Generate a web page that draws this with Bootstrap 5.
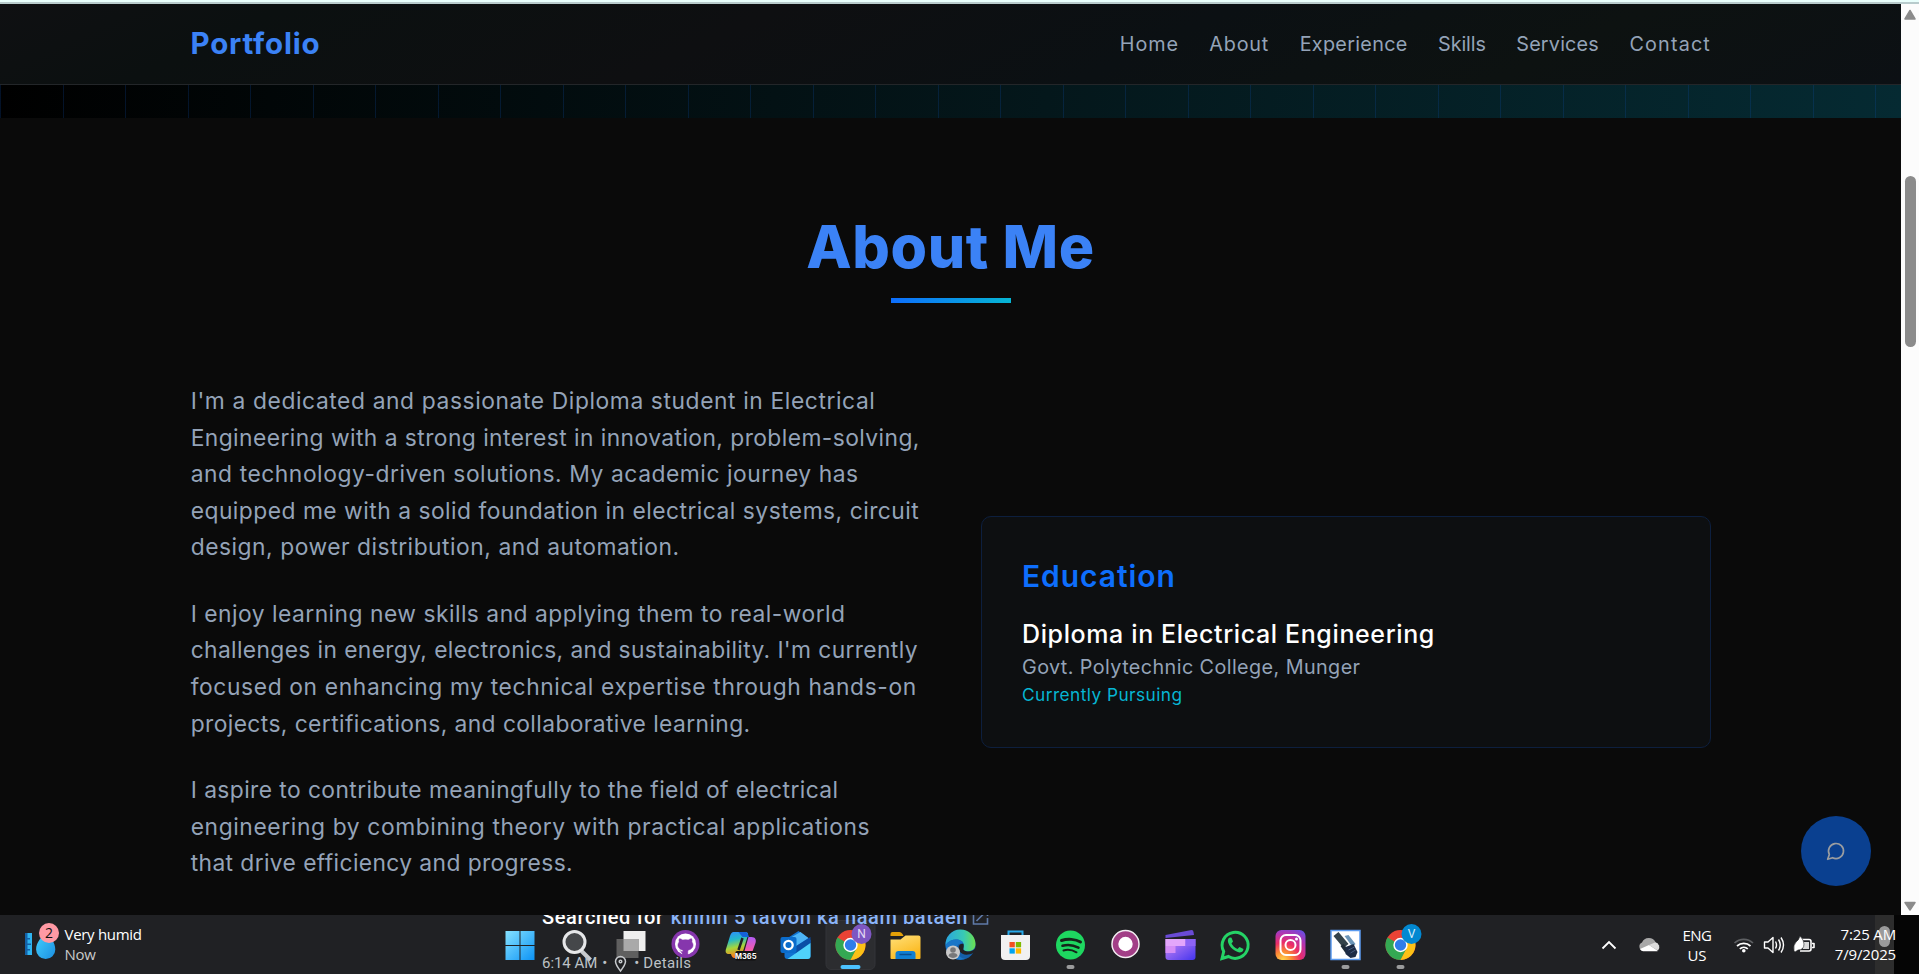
<!DOCTYPE html>
<html lang="en">
<head>
<meta charset="utf-8">
<meta name="viewport" content="width=device-width, initial-scale=1">
<title>Portfolio</title>
<link href="https://cdn.jsdelivr.net/npm/bootstrap@5.3.0/dist/css/bootstrap.min.css" rel="stylesheet">
<style>
body{font-family:Inter,"Open Sans",sans-serif;background:#0a0a0a;white-space:nowrap}
.screen{width:1919px;height:974px}
.edge-top{height:4px;background:linear-gradient(#e9fffc 50%,#b8cbcc 50%)}
.window{height:911px}
.shell{width:1521px;margin-left:190px}
.site-nav{height:81px;border-bottom:1px solid #232629;background:linear-gradient(155deg,#0f1012,#0b1010 14%,#0e0f11 38%,#0b1013 60%,#0d1211 80%,#0c1014)}
.brand{font-size:29.5px;font-weight:700;color:#3b82f6;letter-spacing:.8px;line-height:40px;margin-top:-2px;padding-left:.5px}
.menu{gap:30.5px;margin-right:0}
.menu a{font-size:19.8px;line-height:30px;color:#94a3b8;text-decoration:none}
.grid-band{height:33px;background:repeating-linear-gradient(90deg,rgba(13,80,180,.22) 0 1px,transparent 1px 62.5px),linear-gradient(95deg,#000,#04171b 55%,#052a32)}
.about{padding-top:99px}
.about h1{font-size:59px;font-weight:800;line-height:60px;letter-spacing:.6px;color:#3b82f6;margin-bottom:21px}
.rule{width:120px;height:5px;margin-bottom:80px;background:linear-gradient(90deg,#0d6efd,#06b6d4)}
.cols{gap:61px}
.cols>*{width:730px}
.bio p{font-size:22.8px;line-height:36.56px;margin-bottom:30px;color:#94a3b8}
.bio p:last-child{margin-bottom:0}
.bio span{display:block;padding-left:.7px;word-spacing:.1px}
.edu{height:232px;padding:39px 40px;border:1px solid #0d1f3e;border-radius:10px;background:#0d0f11}
.edu h2{font-size:30px;font-weight:600;line-height:40px;margin-bottom:21px;color:#0d6efd;letter-spacing:.95px}
.edu h3{font-size:25px;font-weight:500;line-height:35px;margin:0;color:#fff;letter-spacing:.62px}
.school{font-size:19.8px;line-height:30px;letter-spacing:.41px;color:#94a3b8}
.status{font-size:17.3px;line-height:25px;letter-spacing:.43px;color:#06b6d4}
.sbar{width:18px;background:#fcfcfc}
.sbar .thumb{width:11px;height:171px;border-radius:6px;background:#8b8b8b;margin-top:154px}
.fab{right:30px;bottom:29px;width:70px;height:70px;background:#0a4090}
.taskbar{height:59px;background:#202124;color:#fff}
.ui{font-family:"Open Sans","Noto Sans",sans-serif;font-size:15px;line-height:20px}
.apps{left:492.500px;top:0}
.slot{width:55px;height:59px}
.ghost{font-family:Roboto,sans-serif;left:542px;top:0}
.gl1{font-size:20px;font-weight:500;line-height:24px;top:-10px;left:0;letter-spacing:.6px}
.gl1 a{color:#8ab4f8;text-decoration:none}
.gl2{font-size:15px;line-height:20px;top:37.500px;left:0;color:#bdc1c6}
.tray{left:1590px;top:0}
</style>
</head>
<body>
<div class="screen d-flex flex-column overflow-hidden">
<div class="edge-top"></div>
<div class="window d-flex">
  <main class="flex-grow-1 position-relative overflow-hidden">
    <nav class="site-nav d-flex align-items-center">
      <div class="shell d-flex justify-content-between align-items-center">
        <span class="brand">Portfolio</span>
        <div class="menu d-flex">
          <a href="#" style="letter-spacing:.9px">Home</a><a href="#" style="letter-spacing:.8px">About</a><a href="#" style="letter-spacing:.3px">Experience</a><a href="#" style="letter-spacing:-.12px">Skills</a><a href="#" style="letter-spacing:.2px">Services</a><a href="#" style="letter-spacing:1.15px">Contact</a>
        </div>
      </div>
    </nav>
    <div class="grid-band"></div>
    <section class="about">
      <h1 class="text-center">About Me</h1>
      <div class="rule mx-auto"></div>
      <div class="shell cols d-flex align-items-center">
        <div class="bio">
          <p><span style="letter-spacing:.589px">I'm a dedicated and passionate Diploma student in Electrical</span>
          <span style="letter-spacing:.425px">Engineering with a strong interest in innovation, problem-solving,</span>
          <span style="letter-spacing:.55px">and technology-driven solutions. My academic journey has</span>
          <span style="letter-spacing:.478px">equipped me with a solid foundation in electrical systems, circuit</span>
          <span style="letter-spacing:.517px">design, power distribution, and automation.</span></p>
          <p><span style="letter-spacing:.476px">I enjoy learning new skills and applying them to real-world</span>
          <span style="letter-spacing:.36px">challenges in energy, electronics, and sustainability. I'm currently</span>
          <span style="letter-spacing:.613px">focused on enhancing my technical expertise through hands-on</span>
          <span style="letter-spacing:.399px">projects, certifications, and collaborative learning.</span></p>
          <p><span style="letter-spacing:.405px">I aspire to contribute meaningfully to the field of electrical</span>
          <span style="letter-spacing:.604px">engineering by combining theory with practical applications</span>
          <span style="letter-spacing:.381px">that drive efficiency and progress.</span></p>
        </div>
        <div class="edu">
          <h2>Education</h2>
          <h3>Diploma in Electrical Engineering</h3>
          <div class="school">Govt. Polytechnic College, Munger</div>
          <div class="status">Currently Pursuing</div>
        </div>
      </div>
    </section>
    <div class="fab position-absolute rounded-circle d-flex align-items-center justify-content-center">
      <svg width="20" height="20" viewBox="0 0 24 24" fill="none" stroke="#9b9da0" stroke-width="2" stroke-linecap="round" stroke-linejoin="round"><path d="M7.900 20A9 9 0 1 0 4 16.100L2 22Z"/></svg>
    </div>
  </main>
  <aside class="sbar d-flex flex-column align-items-center">
    <svg width="18" height="18" viewBox="0 0 18 18"><path d="M9 6.500l5 8.500h-10z" fill="#8b8b8b" stroke="#8b8b8b" stroke-width="1.500" stroke-linejoin="round"/></svg>
    <div class="thumb"></div>
    <svg class="mt-auto" width="18" height="18" viewBox="0 0 18 18"><path d="M9 13L4 5.500h10z" fill="#8b8b8b" stroke="#8b8b8b" stroke-width="1.500" stroke-linejoin="round"/></svg>
  </aside>
</div>

<footer class="taskbar position-relative overflow-hidden">
  <svg class="position-absolute top-0 start-0" width="64" height="59" viewBox="0 915 64 59">
    <defs>
      <linearGradient id="drop" x2="1" y2="1"><stop stop-color="#45d3ff"/><stop offset="1" stop-color="#1b8ee0"/></linearGradient>
      <linearGradient id="win" x2="1" y2="1"><stop stop-color="#86e2ff"/><stop offset="1" stop-color="#0c93f5"/></linearGradient>
    </defs>
    <path d="M25 933h7v22h-7z" fill="#2fb4f0"/><path d="M25 933h2.500v22H25zM27 938h3v1.500h-3zM27 943.500h4v1.500h-4zM27 949h3v1.500h-3z" fill="#1462a8"/>
    <path d="M46 931c4 6 9.300 11 9.300 18.500a9.600 9.600 0 0 1-19.200 0C36 942 42 937 46 931z" fill="url(#drop)"/>
    <circle cx="49" cy="933" r="10" fill="#ff99a4"/>
    <text x="49" y="938" text-anchor="middle" font-family="Open Sans" font-size="14" fill="#111">2</text>
  </svg>
  <div class="ui position-absolute" style="left:64.500px;top:9px"><div style="letter-spacing:-.3px">Very humid</div><div style="letter-spacing:-.3px;color:#c9c9ca">Now</div></div>

  <div class="apps position-absolute d-flex">
    <svg class="slot" viewBox="-27.500 -30 55 59"><path d="M-15-14h14V0h-14zM0-14h14V0H0zM-15 1h14v14h-14zM0 1h14v14H0z" fill="url(#win)"/></svg>
    <svg class="slot" viewBox="-27.500 -30 55 59"><path d="M6 6l9 9" stroke="#c8cacd" stroke-width="4"/><circle cx="-1" cy="-3" r="10.500" fill="#45474a" stroke="#e6e7e9" stroke-width="3"/></svg>
    <svg class="slot" viewBox="-27.500 -30 55 59"><path d="M-7-14h22V6H-7z" fill="#efefef"/><path d="M-14-6H8v19h-22z" fill="#5f5f5f"/><path d="M-7-6H8V6H-7z" fill="#a9a9a9"/></svg>
    <svg class="slot" viewBox="-27.500 -30 55 59"><circle cy="-1" r="14" fill="#8636ad"/><circle cy="-1" r="10.500" fill="#fff"/><path d="M-2.300 10V6.500c-2 .5-3-.3-3.800-1.800M-3 5c-5-1-5.500-6-3.300-8-.4-1.300-.3-2.500.2-3.300 1.200 0 2.300.7 3.300 1.300a11 11 0 0 1 5.600 0c1-.6 2.100-1.300 3.300-1.300.5.800.6 2 .2 3.300C8.500-1 8 4 3 5q-.7.500-.7 1.500V10h-4.600V6.500Q-2.300 5.500-3 5z" fill="#8636ad" stroke="#8636ad" stroke-width=".5"/></svg>
    <svg class="slot" viewBox="-27.500 -30 55 59"><defs><linearGradient id="ma" y2="1" x2=".2"><stop stop-color="#2f8bff"/><stop offset=".35" stop-color="#24b9c8"/><stop offset=".65" stop-color="#a7d63b"/><stop offset="1" stop-color="#ff7a1a"/></linearGradient><linearGradient id="mb" y2="1" x2="0"><stop stop-color="#b15cf5"/><stop offset=".6" stop-color="#f05bb0"/><stop offset="1" stop-color="#ff8a6b"/></linearGradient></defs><path d="M-7-13h12c2 0 3 1.500 2.500 3L2 8c-1 3-3 5-6 5h-2c-2 0-3-2-3.500-4h-2c-3 0-4-2-3-5l4-13c1-2.500 2-4 3.500-4z" fill="url(#ma)"/><path d="M-2-13h7c2 0 2.500 2 3.500 5H2z" fill="#1561d8"/><path d="M2-7L-2 5" stroke="#202124" stroke-width="2.500"/><path d="M8-8h3c4 0 5 3 4 6L11 9c-1 2-2 3-4 3H0c2-1 3-3 4-6z" fill="url(#mb)"/><rect x="-5" y="6" width="20.500" height="9.500" rx="1.500" fill="#111"/><text x="5.200" y="13.600" text-anchor="middle" font-family="Inter" font-size="7.500" font-weight="700" fill="#fff">M365</text></svg>
    <svg class="slot" viewBox="-27.500 -30 55 59"><path d="M-11-5L3-14 15-5v16q0 3-3 3H-8q-3 0-3-3z" fill="#1173d1"/><path d="M-9-5L5-13 13-7-2 3z" fill="#4db5f6"/><path d="M-1 2L15-8v6L0 10z" fill="#0b4ea6"/><path d="M-8 14L15-2v13q0 3-3 3z" fill="#4fd2fb"/><rect x="-15" y="-8" width="16" height="16" rx="2" fill="#0b6ccb"/><circle cx="-7" r="4.200" fill="none" stroke="#fff" stroke-width="2.300"/></svg>
    <svg class="slot" viewBox="-27.500 -30 55 59"><rect x="-24.500" y="-24.500" width="49" height="49" rx="5" fill="#2c2d30" stroke="#333438"/><g id="chrome"><circle r="15" fill="#ea4335"/><path d="M0 0L-13-7.500A15 15 0 0 0 0 15L6.500 3.500z" fill="#34a853"/><path d="M0-7h13.300A15 15 0 0 1 0 15L6 3.500z" fill="#fbc116"/><circle r="7.200" fill="#fff"/><circle r="5.700" fill="#2f7de9"/></g><circle cx="11" cy="-11" r="10" fill="#7e57c2"/><text x="11" y="-6.800" text-anchor="middle" font-family="Roboto" font-size="12" fill="#e4dcf5">N</text><rect x="-10" y="20" width="20" height="4" rx="2" fill="#4cc2ff"/></svg>
    <svg class="slot" viewBox="-27.500 -30 55 59"><defs><linearGradient id="fo" y2="1" x2=".5"><stop stop-color="#ffe07a"/><stop offset="1" stop-color="#fbb81c"/></linearGradient></defs><path d="M-15-11q0-2 2-2h7q1.500 0 3 2l1 2h-13z" fill="#e3a008"/><path d="M-15-5.500h10l5-4h13q2 0 2 2V13q0 1-1 1h-28q-1 0-1-1z" fill="url(#fo)"/><path d="M-10 14V9q0-3 3-3H7q3 0 3 3v5z" fill="#0f7fd3"/><path d="M-6 9.500H6" stroke="#0a4f8f" stroke-width="1.500"/></svg>
    <svg class="slot" viewBox="-27.500 -30 55 59"><defs><linearGradient id="ed" x2="1"><stop stop-color="#2aa6e0"/><stop offset=".6" stop-color="#38c9b5"/><stop offset="1" stop-color="#6be04f"/></linearGradient></defs><circle r="15" fill="#155fa8"/><path d="M-15 0A15 15 0 0 1 15-1C15 5 10 7 5 6 1 5 4 3 3-1 2-6-9-8-15 0z" fill="url(#ed)"/><path d="M-15 0C-9-8 2-6 3-1c-6-2-8 4-6 9 2 4 6 7 10 5A15 15 0 0 1-15 0z" fill="#1976c8"/><path d="M3-1C-1-2-3 2-1 6c3 5 9 4 14 2l2-1V3C12 7 8 7 5 6 1 5 4 3 3-1z" fill="#202124"/><circle cx="-7.500" cy="7.500" r="7" fill="#c9c9c9"/><circle cx="-7.500" cy="5" r="2.800" fill="#77787a"/><path d="M-12 11q0-3 4.500-3t4.500 3q-4.500 4-9 0z" fill="#77787a"/></svg>
    <svg class="slot" viewBox="-27.500 -30 55 59"><path d="M-7-8v-5.500H7V-8" fill="none" stroke="#27a9ea" stroke-width="2"/><path d="M-14.500-10h29V11q0 4-4 4h-21q-4 0-4-4z" fill="#f1f1f1"/><path d="M-6-3h5.300v5.300H-6z" fill="#f25022"/><path d="M.3-3h5.300v5.300H.3z" fill="#7fba00"/><path d="M-6 3.300h5.300v5.300H-6z" fill="#00a4ef"/><path d="M.3 3.300h5.300v5.300H.3z" fill="#ffb900"/></svg>
    <svg class="slot" viewBox="-27.500 -30 55 59"><circle r="14.500" fill="#1ed760"/><g fill="none" stroke="#15251a" stroke-linecap="round"><path d="M-9-4.500C-3-6.500 5-6 10-3" stroke-width="3"/><path d="M-8 .8C-3-.8 3 0 8 2.600" stroke-width="2.500"/><path d="M-7 5.500C-3 4.300 2 5 6 7.300" stroke-width="2"/></g><rect x="-4" y="20" width="8" height="4" rx="2" fill="#9a9b9c"/></svg>
    <svg class="slot" viewBox="-27.500 -30 55 59"><circle cy="-1" r="10.200" fill="#fff" stroke="#a23f87" stroke-width="6"/><circle cy="-1" r="13.500" fill="none" stroke="#f5edf3" stroke-width="1.500"/></svg>
    <svg class="slot" viewBox="-27.500 -30 55 59"><defs><linearGradient id="cl" x2="1" y2="1"><stop stop-color="#cf8bf5"/><stop offset="1" stop-color="#4334ee"/></linearGradient></defs><path d="M-15-10l26-5q2 0 2 2l.5 3L-15-7z" fill="#6a4bd6"/><path d="M-15-6h30V12q0 3-3 3h-24q-3 0-3-3z" fill="url(#cl)"/><path d="M-15-6H5v7h-20z" fill="#e3a6fb"/><path d="M-15 1h10v7h-10z" fill="#d58df6"/><path d="M5-6h10v7H5z" fill="#8d63f5"/></svg>
    <svg class="slot" viewBox="-27.500 -30 55 59"><path d="M-13.500 13.500l1.700-7A13 13 0 1 1-7 11.500z" fill="#202124" stroke="#25d366" stroke-width="3"/><path d="M-5-7.500c-2 0-3 2-2.500 4.500C-6.500 2 0 7 4 7.500c2 0 4-1 4-3.500L4 2 2 4C-.5 3-3 .5-4-1.500l1.500-2L-4-7.200z" fill="#25d366"/></svg>
    <svg class="slot" viewBox="-27.500 -30 55 59"><defs><radialGradient id="ig" cx=".25" cy="1" r="1.150"><stop stop-color="#ffd64f"/><stop offset=".25" stop-color="#fb8a35"/><stop offset=".5" stop-color="#ec2d66"/><stop offset=".75" stop-color="#b734ad"/><stop offset="1" stop-color="#6b4de0"/></radialGradient></defs><rect x="-15" y="-15" width="30" height="30" rx="6" fill="url(#ig)"/><g fill="none" stroke="#fff" stroke-width="2"><rect x="-10" y="-10" width="20" height="20" rx="5.500"/><circle r="5"/></g><circle cx="6" cy="-6" r="1.500" fill="#fff"/></svg>
    <svg class="slot" viewBox="-27.500 -30 55 59"><path d="M-14.500-14.500h29v29h-29z" fill="#fff" stroke="#5b9bf0" stroke-width="1.500"/><path d="M-12-9l5-4L3-1-2 3z" fill="#33424a"/><path d="M-1-9l4-1 7 9-3 3z" fill="#6b95b8"/><path d="M-5 1l3-2 5 6-3 3z" fill="#1f2c38"/><path d="M0 2l8-3 4 8-2 5-5 1-5-4z" fill="#1c2b45"/><path d="M3 5l6-3M5 8l5-3" stroke="#45597c"/><rect x="-4" y="20" width="8" height="4" rx="2" fill="#9a9b9c"/></svg>
    <svg class="slot" viewBox="-27.500 -30 55 59"><use href="#chrome"/><circle cx="11" cy="-11" r="10" fill="#0288d1"/><text x="11" y="-6.800" text-anchor="middle" font-family="Roboto" font-size="12" fill="#d9eefa">V</text><rect x="-4" y="20" width="8" height="4" rx="2" fill="#9a9b9c"/></svg>
  </div>

  <div class="ghost position-absolute">
    <div class="gl1 position-absolute d-flex"><span style="margin-right:7px">Searched for</span><a href="#">kinnin 5 tatvon ka naam bataen</a><svg class="mt-1" style="margin-left:4px" width="17" height="17" viewBox="0 0 17 17" fill="none" stroke="#5f7aa8" stroke-width="1.600"><path d="M7 1.500H1.500v13.500h14V9M4.500 12L14 2.500M10 1.500h5.500V7"/></svg></div>
    <div class="gl2 position-absolute d-flex"><span style="letter-spacing:-.05px">6:14 AM</span><span style="margin-left:5px">•</span>
      <svg style="margin:1px 7px 0" width="13" height="20" viewBox="0 0 13 20" fill="none" stroke="#c6c9cd" stroke-width="1.500"><path d="M6.500 17C3 12.500 1.500 10 1.500 7.500a5 5 0 0 1 10 0c0 2.500-1.500 5-5 9.500z"/><circle cx="6.500" cy="7.500" r="1.300"/></svg>
      <span>•</span><span style="margin-left:4px;letter-spacing:.3px">Details</span></div>
  </div>

  <svg class="tray position-absolute" width="329" height="59" viewBox="1590 915 329 59">
    <path d="M1875 915h19v59h-19z" fill="#2d2d2d"/><path d="M1894 915h25v59h-25z" fill="#050505"/><rect x="1879" y="926" width="11" height="21" rx="5.500" fill="#9b9b9b"/>
    <path d="M1602.500 948.500l6.500-6.500 6.500 6.500" fill="none" stroke="#fff" stroke-width="1.800"/>
    <path d="M1643 951a4.500 4.500 0 0 1-1-8.500 7.500 7.500 0 0 1 13.500-.5 5 5 0 0 1 .5 9z" fill="#a8a8a8"/><path d="M1640 949l9-4 9 6q-1 .3-2 .3h-13q-2-.3-3-2.300z" fill="#fff"/><path d="M1649 945l6-2.500a4.700 4.700 0 0 1 3 8z" fill="#dcdcdc"/>
    <g fill="none" stroke="#fff" stroke-width="1.700"><path d="M1734.500 943a13.500 13.500 0 0 1 18.500 0" stroke="#5e6063"/><path d="M1737 946a10 10 0 0 1 13.500 0M1739.800 948.800a6 6 0 0 1 8 0"/></g><circle cx="1743.800" cy="950.800" r="1.800" fill="#fff"/>
    <g fill="none" stroke="#fff" stroke-width="1.400" stroke-linejoin="round"><path d="M1764.500 942h3.500l5-4.500v15l-5-4.500h-3.500zM1775.500 941.500q2 3.500 0 7M1778.500 939.500q3.500 5.500 0 11M1781 937.500q5 7.500 0 15"/><path d="M1802 939.500h7q2 0 2 2v7.500q0 2-2 2h-9M1812 943.500h2v4h-2" stroke-width="1.600"/></g><path d="M1803 942h6v7h-6z" fill="#d9d9d9"/><path d="M1794 951q-1-6 2-9 3-2 4-6 4 4 4 8 0 6-6 6l-3 2z" fill="#fff" stroke="#202124" stroke-width=".6"/>
  </svg>
  <div class="ui position-absolute text-center" style="left:1682px;top:10px;width:30px"><div style="letter-spacing:-.5px">ENG</div><div>US</div></div>
  <div class="ui position-absolute text-end" style="left:1826px;top:9px;width:70px;letter-spacing:-.15px"><div>7:25 AM</div><div>7/9/2025</div></div>
</footer>
</div>
<script src="https://cdn.jsdelivr.net/npm/bootstrap@5.3.0/dist/js/bootstrap.bundle.min.js"></script>
</body>
</html>
